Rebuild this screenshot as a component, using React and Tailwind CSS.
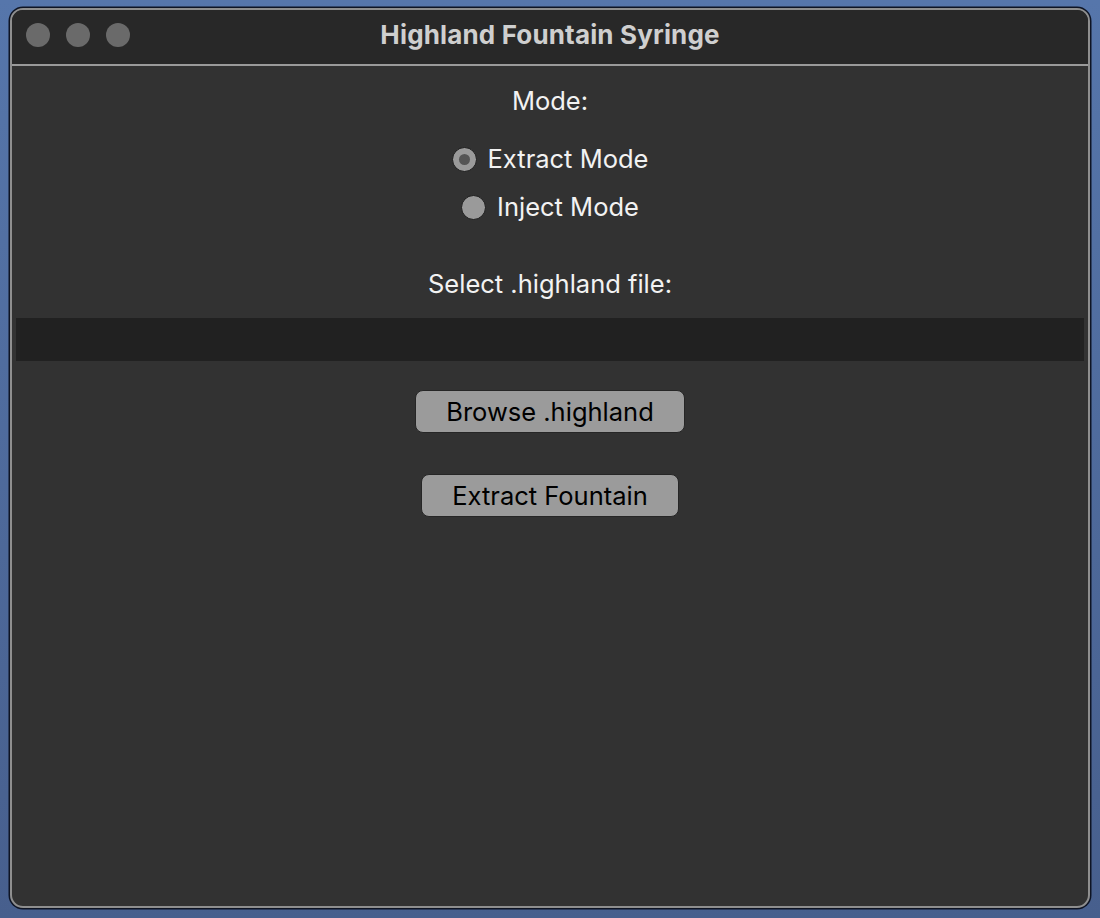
import React, { useState } from "react"

function Radio({ checked, label, onClick }) {
    return (
        <button type="button" onClick={onClick} className="flex items-center gap-[11px] h-[30px]">
            <span className="flex items-center justify-center w-[25px] h-[25px] rounded-full bg-[#9a9a9a] border-[1.5px] border-[#1c1c1c]">
                {checked && <span className="w-[11px] h-[11px] rounded-full bg-[#555555]" />}
            </span>
            <span className="text-[25.5px] leading-[30px] text-[#f2f2f2]">{label}</span>
        </button>
    )
}

function MacButton({ children }) {
    return (
        <button
            type="button"
            className="h-[43px] px-[30px] rounded-[8px] bg-[#9b9b9b] border-[1.5px] border-[#262626] text-[25.5px] leading-[30px] text-black"
        >
            {children}
        </button>
    )
}

export default function App() {
    const [mode, setMode] = useState("extract")

    return (
        <div
            className="w-[1100px] h-[918px] bg-gradient-to-b from-[#5676ab] to-[#475f8d] pt-[8px] pl-[10px]"
            style={{ fontFamily: "Inter, 'Noto Sans', sans-serif" }}
        >
            <div className="w-[1080px] h-[900px] rounded-[13px] border-2 border-[#8f8f8f] shadow-[0_0_0_1.5px_#0e1424] overflow-hidden flex flex-col bg-[#323232]">
                {/* title bar */}
                <div className="relative h-[56px] shrink-0 bg-[#282828] border-b-2 border-[#9a9a9a] flex items-center justify-center">
                    <div className="absolute left-[14px] top-[13px] flex gap-[16px]">
                        <span className="w-[24px] h-[24px] rounded-full bg-[#6a6a6a]" />
                        <span className="w-[24px] h-[24px] rounded-full bg-[#6a6a6a]" />
                        <span className="w-[24px] h-[24px] rounded-full bg-[#6a6a6a]" />
                    </div>
                    <span className="text-[26px] font-bold text-[#cfcfcf] pb-[5px] tracking-[0.15px]">Highland Fountain Syringe</span>
                </div>

                {/* content */}
                <div className="flex flex-col items-center pt-[20px]">
                    <div className="text-[25.5px] leading-[30px] text-[#f2f2f2]">Mode:</div>
                    <div className="mt-[28px]">
                        <Radio checked={mode === "extract"} label="Extract Mode" onClick={() => setMode("extract")} />
                    </div>
                    <div className="mt-[18px]">
                        <Radio checked={mode === "inject"} label="Inject Mode" onClick={() => setMode("inject")} />
                    </div>
                    <div className="mt-[47px] text-[25.5px] leading-[30px] text-[#f2f2f2]">Select .highland file:</div>
                    <div className="mt-[19px] self-stretch mx-[4px] h-[43px] bg-[#212121]" />
                    <div className="mt-[29px]">
                        <MacButton>Browse .highland</MacButton>
                    </div>
                    <div className="mt-[41px]">
                        <MacButton>{mode === "extract" ? "Extract Fountain" : "Inject Fountain"}</MacButton>
                    </div>
                </div>
            </div>
        </div>
    )
}
